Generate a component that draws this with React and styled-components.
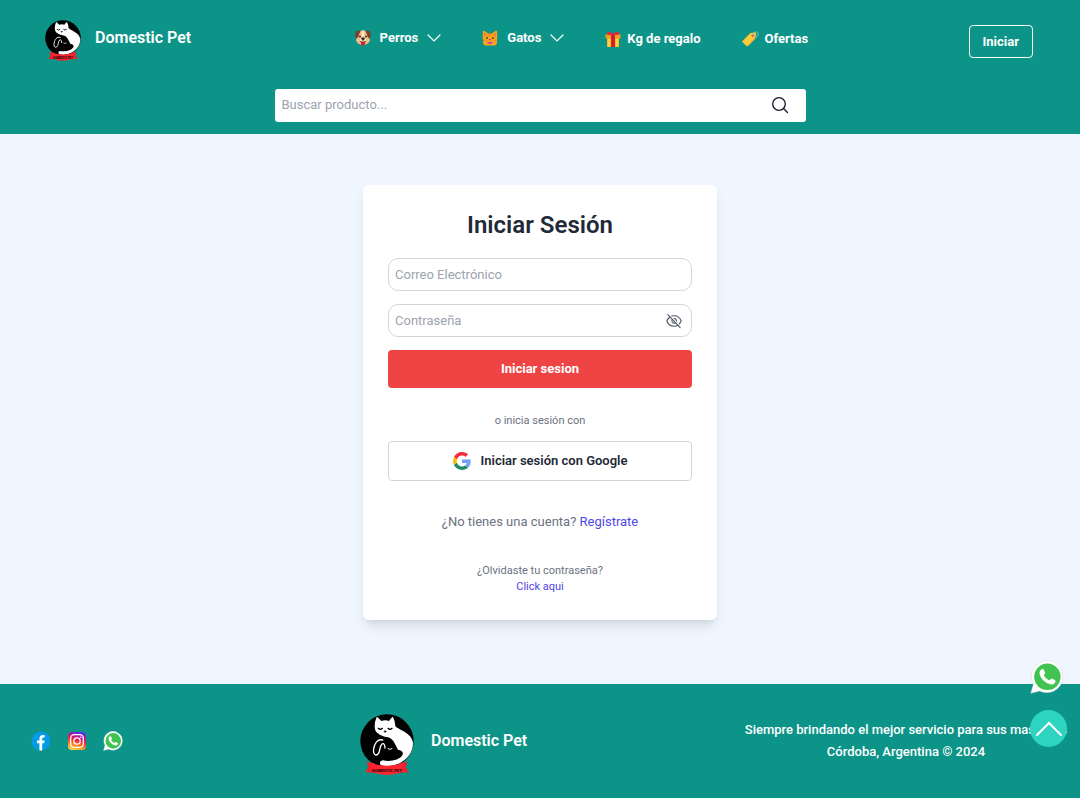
import React, { useState } from 'react';
import styled, { createGlobalStyle } from 'styled-components';

const GlobalStyle = createGlobalStyle`
  * {
    box-sizing: border-box;
  }

  body {
    margin: 0;
    overflow-x: hidden;
    background-color: #eff6ff;
    font-family: Roboto, "Liberation Sans", sans-serif;
    font-size: 13px;
    line-height: 20px;
    color: #1f2937;
  }

  button,
  input {
    font: inherit;
  }

  svg {
    display: block;
    flex-shrink: 0;
  }
`;

const Page = styled.div`
  display: flex;
  flex-direction: column;
  min-height: 100vh;
`;

const Header = styled.header`
  display: flex;
  flex-direction: column;
  align-items: center;
  padding: 20px 0 12px;
  background-color: #0d9488;
`;

const TopRow = styled.div`
  display: flex;
  justify-content: space-between;
  align-items: flex-start;
  width: 100%;
  padding: 0 47px 0 45px;
`;

const Brand = styled.a`
  display: flex;
  align-items: center;
  gap: ${(props) => props.$gap};
  color: #fff;
  font-size: 16px;
  font-weight: 600;
  line-height: 22px;
  text-decoration: none;
`;

const BrandLogo = styled.svg`
  width: ${(props) => props.$size};
  height: ${(props) => props.$size};
  overflow: visible;
`;

const Nav = styled.nav`
  display: flex;
  align-items: center;
  gap: 41px;
  height: 36px;
  padding-left: 3px;
`;

const navItem = `
  display: flex;
  align-items: center;
  padding: 0;
  border: none;
  background: none;
  color: #fff;
  font-weight: 700;
  text-decoration: none;
  cursor: pointer;
`;

const NavButton = styled.button`
  ${navItem}
  gap: 9px;
`;

const NavLink = styled.a`
  ${navItem}
  gap: 6px;
  padding-top: 2px;
`;

const LoginButton = styled.button`
  height: 33px;
  margin-top: 5px;
  padding: 0 13px;
  border: 1px solid #fff;
  border-radius: 4px;
  background: none;
  color: #fff;
  font-weight: 700;
  cursor: pointer;
`;

const SearchBar = styled.form`
  display: flex;
  align-items: center;
  width: 100%;
  max-width: 531px;
  height: 33px;
  margin-top: 31px;
  padding: 0 17px 1px 7px;
  border-radius: 3px;
  background-color: #fff;
`;

const BareInput = styled.input`
  flex: 1;
  min-width: 0;
  padding: 0;
  border: none;
  outline: none;
  background: none;
  color: #1f2937;

  &::placeholder {
    color: #9ca3af;
    opacity: 1;
  }
`;

const IconButton = styled.button`
  display: flex;
  padding: 0;
  border: none;
  background: none;
  color: ${(props) => props.$color};
  cursor: pointer;
`;

const Main = styled.main`
  display: flex;
  flex: 1;
  justify-content: center;
  align-items: flex-start;
  padding: 51px 16px 64px;
`;

const Card = styled.section`
  display: flex;
  flex-direction: column;
  width: 100%;
  max-width: 354px;
  padding: 25px;
  border-radius: 6px;
  background-color: #fff;
  box-shadow: 0 8px 12px -2px rgba(0, 0, 0, 0.1), 0 3px 5px -3px rgba(0, 0, 0, 0.1);
  text-align: center;
`;

const Title = styled.h1`
  margin: 0 0 18px;
  font-size: 24px;
  line-height: 30px;
  font-weight: 600;
`;

const Form = styled.form`
  display: flex;
  flex-direction: column;
  gap: 13px;
`;

const Field = styled.div`
  display: flex;
  align-items: center;
  height: 33px;
  padding: 0 9px 0 6px;
  border: 1px solid #d1d5db;
  border-radius: 10px;
`;

const SubmitButton = styled.button`
  height: 38px;
  padding: 0 0 1px;
  border: none;
  border-radius: 4px;
  background-color: #ef4444;
  color: #fff;
  font-weight: 700;
  cursor: pointer;
`;

const GoogleButton = styled.button`
  display: flex;
  justify-content: center;
  align-items: center;
  gap: 10px;
  height: 40px;
  border: 1px solid #d1d5db;
  border-radius: 4px;
  background-color: #fff;
  color: #1f2937;
  font-weight: 600;
  cursor: pointer;
`;

const Note = styled.p`
  margin: 31px 0 0;
  color: #6b7280;
`;

const SmallNote = styled.p`
  margin: ${(props) => props.$margin};
  font-size: 11px;
  line-height: 16px;
  color: #6b7280;
`;

const Link = styled.a`
  color: #4f46e5;
  text-decoration: none;
`;

const BlockLink = styled(Link)`
  display: block;
`;

const Footer = styled.footer`
  display: grid;
  grid-template-columns: repeat(3, 1fr);
  align-items: center;
  padding: 30px 0;
  background-color: #0d9488;
`;

const Social = styled.div`
  display: flex;
  gap: 16px;
  padding-left: 31px;
`;

const FooterText = styled.p`
  margin: 0;
  padding-left: 12px;
  color: #fff;
  font-weight: 500;
  line-height: 22px;
  text-align: center;
  white-space: nowrap;
`;

const Floating = styled.div`
  position: fixed;
  right: 13px;
  bottom: 51px;
  display: flex;
  flex-direction: column;
  align-items: flex-start;
  gap: 16px;
`;

const UpButton = styled.button`
  display: flex;
  justify-content: center;
  align-items: center;
  width: 37px;
  height: 37px;
  padding: 0;
  border: none;
  border-radius: 50%;
  background-color: #2dd4bf;
  color: #fff;
  cursor: pointer;
`;

function Logo({ size }) {
  return (
    <BrandLogo $size={size} viewBox="0 0 162 162" aria-hidden="true">
      <circle cx="81" cy="81" r="80" fill="#000" />
      <path
        fill="#fff"
        d="M50 9 Q52 8 64 21 Q76 17 87 21 Q96 8 99 9 Q105 20 106 36 C114 48 154 54 159 86 C160 124 126 155 84 156 Q64 157 60 150 Q58 141 68 139 C92 144 118 138 127 124 C132 112 124 110 114 107 C104 90 102 76 84 70 C58 64 44 56 44 38 Q44 22 50 9Z"
      />
      <g fill="none" strokeLinecap="round">
        <path stroke="#000" strokeWidth="4" d="M55 43 q6 6 12 0 M84 43 q6 6 12 0" />
        <path fill="#000" stroke="#000" strokeWidth="2" d="M73 51 h6 l-3 4Z" />
        <path stroke="#fff" strokeWidth="4" d="M68 78 C52 74 44 88 41 104 C38 120 46 126 53 121 C62 115 57 98 66 90 C72 86 75 94 75 102" />
        <path stroke="#fff" strokeWidth="3" d="M84 104 q6 5 12 0" />
      </g>
      <path fill="#f0202c" d="M20 143 L44 148 L44 176 L16 175 L25 159Z M142 143 L118 148 L118 176 L146 175 L137 159Z" />
      <path fill="#ff2530" d="M31 147 Q81 163 131 147 L127 174 Q81 192 35 174Z" />
      <text x="81" y="174" textAnchor="middle" fontSize="13" fontWeight="900" fontStyle="italic" fill="#260608">
        DOMESTIC PET
      </text>
    </BrandLogo>
  );
}

function DogIcon() {
  return (
    <svg width="16" height="16" viewBox="0 0 32 32" aria-hidden="true">
      <path fill="#eebd86" d="M8 3 Q16 -1 24 3 Q29 12 30 21 Q27 29 16 30 Q5 29 2 21 Q3 12 8 3Z" />
      <path fill="#fbe3c0" d="M14 1 h4 L19 14 Q24 18 21 23 H11 Q8 18 13 14Z" />
      <path fill="#7b3f2d" d="M11 2 Q2 -1 1 6 Q-1 15 3 17 Q8 14 8 9Z M21 2 Q30 -1 31 6 Q33 15 29 17 Q24 14 24 9Z" />
      <circle cx="10" cy="13" r="2" fill="#3b2a27" />
      <circle cx="22" cy="13" r="2" fill="#3b2a27" />
      <path fill="#3b2a27" d="M12 16 Q16 13 20 16 Q19 20 16 21 Q13 20 12 16Z" />
      <path fill="none" stroke="#3b2a27" strokeWidth="1.5" d="M10 23 Q14 25 16 21 Q18 25 22 23" />
      <path fill="#dc143c" d="M12 24 h8 v4 q-4 7 -8 0Z" />
    </svg>
  );
}

function CatIcon() {
  return (
    <svg width="16" height="16" viewBox="0 0 32 32" aria-hidden="true">
      <path fill="#fba51a" d="M2 2 Q5 0 12 7 H20 Q27 0 30 2 Q31 12 30 24 Q30 31 24 31 H8 Q2 31 2 24 Q1 12 2 2Z" />
      <path fill="#f2703f" d="M4 5 L9 10 L5 13Z M28 5 L23 10 L27 13Z M2 19 l5 1 v2 l-5 -1Z M30 19 l-5 1 v2 l5 -1Z" />
      <path fill="#f47b20" d="M13 7 h1 v5 h-1Z M15 7 h2 v6 h-2Z M18 7 h1 v5 h-1Z" />
      <circle cx="10" cy="16" r="2" fill="#5a403a" />
      <circle cx="22" cy="16" r="2" fill="#5a403a" />
      <path fill="#ba3b8c" d="M13 18 h6 l-3 3Z" />
      <path fill="#c53fc0" d="M10 23 Q16 25 22 23 Q21 28 16 28 Q11 28 10 23Z" />
    </svg>
  );
}

function GiftIcon() {
  return (
    <svg width="16" height="17" viewBox="0 0 32 34" aria-hidden="true">
      <path fill="#fdb62b" d="M4 14 h24 v17 q0 1 -1 1 H5 q-1 0 -1 -1Z" />
      <path fill="#ffd23c" d="M6 15 h4 v17 H6Z M22 15 h4 v17 h-4Z" />
      <path fill="#f99b1c" d="M1 7 h30 v8 H1Z" />
      <path fill="#dd2233" d="M12 7 h8 v25 h-8Z" />
      <path fill="#a91d3a" d="M15 7 h2 v25 h-2Z" />
      <path fill="#ed2637" d="M16 8 Q3 9 4 4 Q6 -2 16 6 Q26 -2 28 4 Q29 9 16 8Z" />
    </svg>
  );
}

function TagIcon() {
  return (
    <svg width="17" height="16" viewBox="0 0 34 32" aria-hidden="true">
      <path fill="#fdca3a" d="M1 20 L17 4 L26 3 Q29 4 28 8 L26 16 L12 30 Q10 31 8 29 L1 22 Q0 21 1 20Z" />
      <path fill="#f2a52c" d="M27 15 L12 30 L10 30 L26 13Z" />
      <circle cx="22" cy="9" r="3" fill="#e2574c" />
      <path fill="none" stroke="#a9cdbf" strokeWidth="1.5" d="M22 9 Q22 1 29 2 Q36 5 30 11 Q27 13 22 9" />
    </svg>
  );
}

function ChevronDown() {
  return (
    <svg width="14" height="8" viewBox="0 0 14 8" fill="none" stroke="currentColor" strokeWidth="1.2" strokeLinecap="round" aria-hidden="true">
      <path d="M1 1 L7 7 L13 1" />
    </svg>
  );
}

function SearchIcon() {
  return (
    <svg width="18" height="18" viewBox="0 0 18 18" fill="none" stroke="currentColor" strokeWidth="1.3" strokeLinecap="round" aria-hidden="true">
      <circle cx="8" cy="8" r="6.3" />
      <path d="M12.5 12.5 L16.5 16.5" />
    </svg>
  );
}

function EyeOffIcon() {
  return (
    <svg width="16" height="16" viewBox="0 0 16 16" fill="none" stroke="currentColor" strokeWidth="1.1" strokeLinecap="round" aria-hidden="true">
      <path d="M3.6 4.2 Q1.6 5.8 0.8 8 Q3 13.2 8 13.2 Q10.2 13.2 12 12.2" />
      <path d="M5.6 3 Q13 1.6 15.2 8 Q14.6 9.6 13.4 10.9" />
      <path d="M6.2 6.6 Q5.2 8.4 6.6 9.7 Q7.6 10.6 9.2 10.1 M8 5.5 Q10.3 5.7 10.5 8" />
      <path d="M1.8 1.6 L14.2 14.6" />
    </svg>
  );
}

function GoogleIcon() {
  return (
    <svg width="18" height="18" viewBox="0 0 48 48" aria-hidden="true">
      <path fill="#f62b37" d="M24 9.5c3.54 0 6.71 1.22 9.21 3.6l6.85-6.85C35.9 2.38 30.47 0 24 0 14.62 0 6.51 5.38 2.56 13.22l7.98 6.19C12.43 13.72 17.74 9.5 24 9.5z" />
      <path fill="#6d9ff5" d="M46.98 24.55c0-1.57-.15-3.09-.38-4.55H24v9.02h12.94c-.58 2.96-2.26 5.48-4.78 7.18l7.73 6c4.51-4.18 7.09-10.36 7.09-17.65z" />
      <path fill="#fbbc05" d="M10.53 28.59c-.48-1.45-.76-2.99-.76-4.59s.27-3.14.76-4.59l-7.98-6.19C.92 16.46 0 20.12 0 24c0 3.88.92 7.54 2.56 10.78l7.97-6.19z" />
      <path fill="#1d8a68" d="M24 48c6.48 0 11.93-2.13 15.89-5.81l-7.73-6c-2.15 1.45-4.92 2.3-8.16 2.3-6.26 0-11.57-4.22-13.47-9.91l-7.98 6.19C6.51 42.62 14.62 48 24 48z" />
    </svg>
  );
}

function FacebookIcon() {
  return (
    <svg width="20" height="20" viewBox="0 0 20 20" aria-hidden="true">
      <circle cx="10" cy="10" r="9.5" fill="#039be5" />
      <path fill="#fff" d="M8.4 19.4 V12.2 H6 V9.5 H8.4 V7.8 C8.4 5.3 9.7 4.1 11.9 4.1 Q13 4.1 13.7 4.3 V6.6 H12.5 C11.4 6.6 11.2 7.1 11.2 8 V9.5 H13.6 L13.2 12.2 H11.2 V19.4Z" />
    </svg>
  );
}

function InstagramIcon() {
  return (
    <svg width="20" height="20" viewBox="0 0 20 20" aria-hidden="true">
      <defs>
        <linearGradient id="ig" x1="0.35" y1="1" x2="0.65" y2="0">
          <stop offset="0" stopColor="#ffd34a" />
          <stop offset="0.3" stopColor="#ff7a1c" />
          <stop offset="0.55" stopColor="#f01a45" />
          <stop offset="0.8" stopColor="#a31bb0" />
          <stop offset="1" stopColor="#4b35e8" />
        </linearGradient>
      </defs>
      <rect x="1" y="1" width="18" height="18" rx="4" fill="url(#ig)" />
      <g fill="none" stroke="#fff" strokeWidth="1.3">
        <rect x="3.7" y="3.7" width="12.6" height="12.6" rx="3.5" />
        <circle cx="10" cy="10" r="3.2" />
      </g>
      <circle cx="13.8" cy="6.3" r="0.8" fill="#fff" />
    </svg>
  );
}

function WhatsappIcon({ size }) {
  return (
    <svg width={size} height={size} viewBox="0 0 34 34" aria-hidden="true">
      <path
        fill="#fff"
        stroke="#cfd8dc"
        strokeWidth="0.5"
        d="M17.4 0.6 A16 16 0 1 1 9.8 30.9 L0.8 33.3 L3.3 24.4 A16 16 0 0 1 17.4 0.6Z"
      />
      <circle cx="17.4" cy="16.8" r="13.2" fill="#40c351" />
      <path
        fill="#fff"
        d="M11.2 9.4 Q12.4 8.6 13.6 9.2 L15.2 13 Q15.3 13.8 13.7 15.3 Q15.6 19 19.3 20.5 Q21 18.5 21.5 18.5 L25.3 20.3 Q25.8 20.8 25.1 22.4 Q23.7 24.7 21 24.6 Q17 24 13.4 20.5 Q9.6 16.7 9.4 13.1 Q9.4 10.9 11.2 9.4Z"
      />
    </svg>
  );
}

function App() {
  const [showPassword, setShowPassword] = useState(false);

  const handleSubmit = (event) => {
    event.preventDefault();
  };

  return (
    <Page>
      <GlobalStyle />
      <Header>
        <TopRow>
          <Brand href="#" $gap="14px">
            <Logo size="36px" />
            Domestic Pet
          </Brand>
          <Nav>
            <NavButton type="button">
              <DogIcon />
              Perros
              <ChevronDown />
            </NavButton>
            <NavButton type="button">
              <CatIcon />
              Gatos
              <ChevronDown />
            </NavButton>
            <NavLink href="#">
              <GiftIcon />
              Kg de regalo
            </NavLink>
            <NavLink href="#">
              <TagIcon />
              Ofertas
            </NavLink>
          </Nav>
          <LoginButton type="button">Iniciar</LoginButton>
        </TopRow>
        <SearchBar onSubmit={handleSubmit}>
          <BareInput type="text" placeholder="Buscar producto..." aria-label="Buscar producto" />
          <IconButton type="submit" $color="#111827" aria-label="Buscar">
            <SearchIcon />
          </IconButton>
        </SearchBar>
      </Header>

      <Main>
        <Card>
          <Title>Iniciar Sesión</Title>
          <Form onSubmit={handleSubmit}>
            <Field>
              <BareInput type="email" placeholder="Correo Electrónico" aria-label="Correo Electrónico" />
            </Field>
            <Field>
              <BareInput
                type={showPassword ? 'text' : 'password'}
                placeholder="Contraseña"
                aria-label="Contraseña"
              />
              <IconButton
                type="button"
                $color="#4b5563"
                aria-label="Mostrar contraseña"
                onClick={() => setShowPassword(!showPassword)}
              >
                <EyeOffIcon />
              </IconButton>
            </Field>
            <SubmitButton type="submit">Iniciar sesion</SubmitButton>
          </Form>
          <SmallNote $margin="25px 0 12px">o inicia sesión con</SmallNote>
          <GoogleButton type="button">
            <GoogleIcon />
            Iniciar sesión con Google
          </GoogleButton>
          <Note>
            ¿No tienes una cuenta? <Link href="#">Regístrate</Link>
          </Note>
          <SmallNote $margin="31px 0 0">
            ¿Olvidaste tu contraseña?
            <BlockLink href="#">Click aqui</BlockLink>
          </SmallNote>
        </Card>
      </Main>

      <Footer>
        <Social>
          <Link href="#" aria-label="Facebook">
            <FacebookIcon />
          </Link>
          <Link href="#" aria-label="Instagram">
            <InstagramIcon />
          </Link>
          <Link href="#" aria-label="WhatsApp">
            <WhatsappIcon size={20} />
          </Link>
        </Social>
        <Brand href="#" $gap="17px">
          <Logo size="54px" />
          Domestic Pet
        </Brand>
        <FooterText>
          Siempre brindando el mejor servicio para sus mascotas
          <br />
          Córdoba, Argentina © 2024
        </FooterText>
      </Footer>

      <Floating>
        <Link href="#" aria-label="WhatsApp">
          <WhatsappIcon size={34} />
        </Link>
        <UpButton type="button" aria-label="Volver arriba" onClick={() => window.scrollTo(0, 0)}>
          <svg width="28" height="16" viewBox="0 0 28 16" fill="none" stroke="currentColor" strokeWidth="2" strokeLinecap="round" aria-hidden="true">
            <path d="M2 14 L14 2 L26 14" />
          </svg>
        </UpButton>
      </Floating>
    </Page>
  );
}

export default App;
